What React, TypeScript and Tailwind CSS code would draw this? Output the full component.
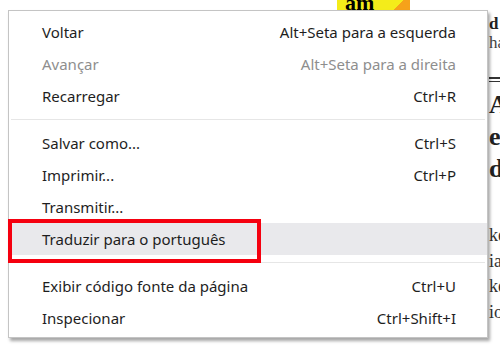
import { type FC } from "react";

interface Item {
  label: string;
  shortcut?: string;
  disabled?: boolean;
  active?: boolean;
}

const groups: Item[][] = [
  [
    { label: "Voltar", shortcut: "Alt+Seta para a esquerda" },
    { label: "Avançar", shortcut: "Alt+Seta para a direita", disabled: true },
    { label: "Recarregar", shortcut: "Ctrl+R" },
  ],
  [
    { label: "Salvar como...", shortcut: "Ctrl+S" },
    { label: "Imprimir...", shortcut: "Ctrl+P" },
    { label: "Transmitir..." },
    { label: "Traduzir para o português", active: true },
  ],
  [
    { label: "Exibir código fonte da página", shortcut: "Ctrl+U" },
    { label: "Inspecionar", shortcut: "Ctrl+Shift+I" },
  ],
];

const MenuRow: FC<{ item: Item }> = ({ item }) => (
  <div
    className={`relative flex h-8 items-center justify-between pl-[33px] pr-[31px] ${
      item.active ? "bg-[#e9e9ec]" : ""
    } ${item.disabled ? "text-[#8e8e8e]" : "text-[#1e1e1e]"}`}
  >
    <span>{item.label}</span>
    {item.shortcut && <span>{item.shortcut}</span>}
    {item.active && (
      <div className="absolute left-[-1px] top-[-4px] h-[44px] w-[253px] border-4 border-[#f5000f]" />
    )}
  </div>
);

export default function App() {
  return (
    <div className="relative h-[350px] w-[500px] overflow-hidden bg-white font-['Liberation_Serif',serif]">
      {/* page behind the menu */}
      <div className="ml-[337px] flex h-[10px] w-[73px] items-end overflow-hidden bg-[#f4ec1a]">
        <span className="ml-[8px] text-[22px] font-bold leading-[14px] text-black">am</span>
        <div className="ml-auto h-[10px] w-[22px] bg-[linear-gradient(135deg,transparent_50%,#f6a21a_50%)]" />
      </div>
      <div className="ml-[489px] flex flex-col text-[#222]">
        <span className="mt-[6px] text-[17px] font-bold leading-[16px]">d</span>
        <span className="mt-[2px] text-[17px] leading-[18px] text-[#444]">ha</span>
        <div className="mt-[25px] h-[2px] w-[20px] bg-[#333]" />
        <div className="mt-[2px] h-[1px] w-[20px] bg-[#333]" />
        <span className="mt-[7px] text-[26px] font-bold leading-[32px]">A</span>
        <span className="text-[26px] font-bold leading-[32px]">e</span>
        <span className="text-[26px] font-bold leading-[32px]">d</span>
        <span className="mt-[38px] text-[18px] leading-[25.5px] text-[#333]">ke</span>
        <span className="text-[18px] leading-[25.5px] text-[#333]">ia</span>
        <span className="text-[18px] leading-[25.5px] text-[#333]">ke</span>
        <span className="text-[18px] leading-[25.5px] text-[#333]">io</span>
      </div>

      {/* context menu */}
      <div className="absolute left-[8px] top-[10px] w-[480px] border border-[#c4c4c4] bg-white pb-[3px] pt-[5px] font-['Noto_Sans',sans-serif] text-[15px] shadow-[2px_3px_3px_rgba(0,0,0,0.35)]">
        {groups.map((group, gi) => (
          <div key={gi}>
            {gi > 0 && (
              <div className="flex h-[15px] items-center px-[2px]">
                <div className="h-px w-full bg-[#e6e6e6]" />
              </div>
            )}
            {group.map((item) => (
              <MenuRow key={item.label} item={item} />
            ))}
          </div>
        ))}
      </div>
    </div>
  );
}
